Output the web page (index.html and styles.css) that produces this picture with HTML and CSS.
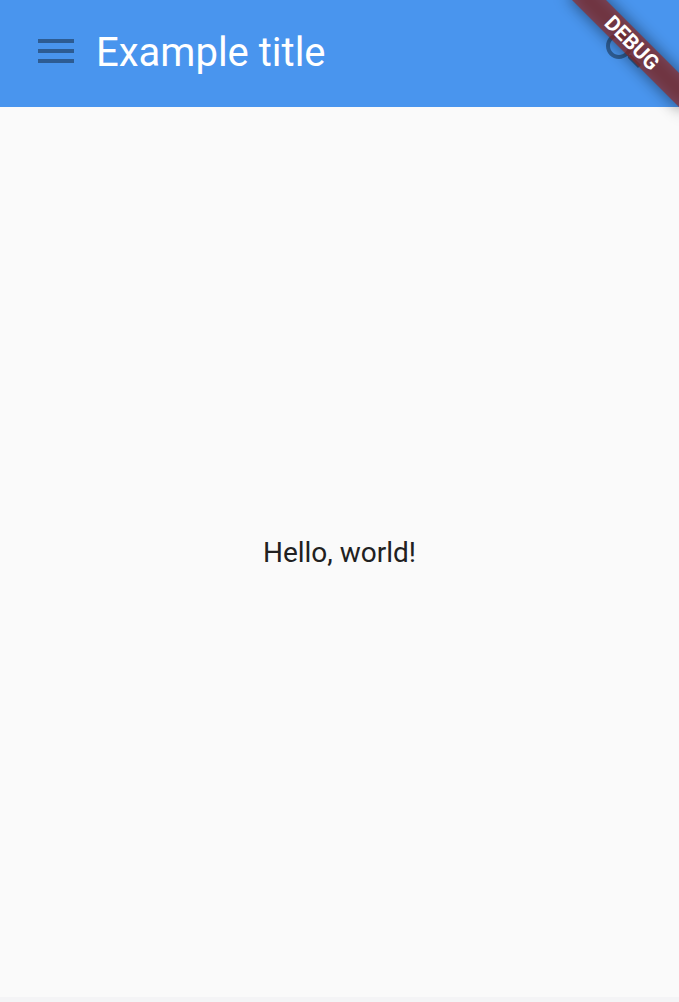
FILE: index.html
```html
<!DOCTYPE html>
<html lang="en">
<head>
<meta charset="utf-8">
<meta name="viewport" content="width=device-width, initial-scale=1">
<title>Example title</title>
<link rel="stylesheet" href="styles.css">
</head>
<body>
<header class="app-bar">
  <button class="icon-button" type="button" aria-label="Navigation menu">
    <svg class="icon" viewBox="0 0 24 24" aria-hidden="true"><path d="M3 18h18v-2H3v2zm0-5h18v-2H3v2zm0-7v2h18V6H3z"/></svg>
  </button>
  <h1 class="title">Example title</h1>
  <button class="icon-button" type="button" aria-label="Search">
    <svg class="icon" viewBox="0 0 24 24" aria-hidden="true"><path d="M15.5 14h-.79l-.28-.27C15.41 12.59 16 11.11 16 9.5 16 5.91 13.09 3 9.5 3S3 5.91 3 9.5 5.91 16 9.5 16c1.61 0 3.09-.59 4.23-1.57l.27.28v.79l5 4.99L20.49 19l-4.99-5zm-6 0C7.01 14 5 11.99 5 9.5S7.01 5 9.5 5 14 7.01 14 9.5 11.99 14 9.5 14z"/></svg>
  </button>
</header>
<main class="content">
  <p class="message">Hello, world!</p>
</main>
<footer class="bottom-edge"></footer>
<div class="banner">
  <div class="ribbon"><span class="ribbon-label">DEBUG</span></div>
</div>
</body>
</html>
```
FILE: styles.css
```css
* {
  box-sizing: border-box;
}

body {
  margin: 0;
  min-height: 100vh;
  display: flex;
  flex-direction: column;
  position: relative;
  background: #fafafa;
  color: #212121;
  font-family: Roboto, "Liberation Sans", sans-serif;
}

.app-bar {
  display: flex;
  align-items: center;
  gap: 16px;
  padding: 27px 31px 32px 32px;
  background: #4995ee;
}

.icon-button {
  display: flex;
  padding: 0;
  border: 0;
  background: none;
  color: rgba(0, 0, 0, 0.38);
  cursor: pointer;
}

.icon {
  width: 48px;
  height: 48px;
  fill: currentColor;
}

.title {
  flex: 1;
  margin: 0;
  padding-top: 4px;
  color: #fff;
  font-size: 40px;
  font-weight: 400;
  line-height: 44px;
}

.content {
  flex: 1;
  display: flex;
  align-items: center;
  justify-content: center;
}

.message {
  margin: 0;
  padding-top: 2px;
  font-size: 28px;
  line-height: 32px;
}

.bottom-edge {
  height: 5px;
  background: #f4f4f6;
}

.banner {
  position: absolute;
  top: 0;
  right: 0;
  width: 160px;
  height: 160px;
  overflow: hidden;
  pointer-events: none;
}

.ribbon {
  position: absolute;
  top: 33px;
  left: 35px;
  width: 160px;
  height: 24px;
  transform: rotate(45deg);
}

.ribbon::before,
.ribbon::after {
  content: "";
  position: absolute;
  inset: 0;
}

.ribbon::before {
  background: rgba(0, 0, 0, 0.5);
  filter: blur(8px);
}

.ribbon::after {
  background: rgba(153, 37, 27, 0.63);
}

.ribbon-label {
  position: relative;
  z-index: 1;
  display: block;
  padding-right: 6px;
  color: #fff;
  font-size: 21px;
  font-weight: 700;
  line-height: 24px;
  text-align: center;
}
```
